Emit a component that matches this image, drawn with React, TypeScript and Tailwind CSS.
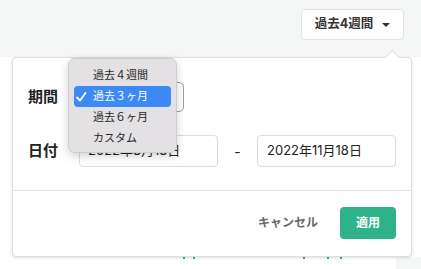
import React from "react";

export default function App() {
  return (
    <div className="relative w-[421px] h-[269px] overflow-hidden bg-white font-['Inter','Noto_Sans_CJK_JP',sans-serif] text-[#222]">
      {/* page background */}
      <div className="flex flex-col h-full">
        <div className="h-[57px] bg-[#f5f6f6] flex justify-end items-start pt-[9px] pr-[17px]">
          <button className="w-[103px] h-[31px] bg-white border border-[#e2e2e2] rounded-[4px] flex items-center justify-center gap-[9px] text-[12.5px] font-bold text-[#333]">
            <span>過去4週間</span>
            <span className="w-0 h-0 border-l-[4px] border-r-[4px] border-t-[4px] border-l-transparent border-r-transparent border-t-[#333]" />
          </button>
        </div>
        <div className="flex-1 flex flex-col justify-end">
          <div className="h-[12px] flex">
            <div className="flex-1 flex items-start">
              <div className="ml-[183px] w-[2px] h-[2px] bg-[#2eb289]" />
              <div className="ml-[8px] w-[2px] h-[2px] bg-[#2eb289]" />
              <div className="ml-[108px] w-[2px] h-[2px] bg-[#2eb289]" />
              <div className="ml-[22px] w-[2px] h-[2px] bg-[#2eb289]" />
              <div className="ml-[11px] w-[2px] h-[2px] bg-[#2eb289]" />
            </div>
            <div className="w-[25px] bg-[#f5f6f6]" />
          </div>
        </div>
      </div>

      {/* popover */}
      <div className="absolute left-[12px] top-[57px] w-[400px] h-[200px] bg-white border border-[#dedede] rounded-[4px] shadow-[0_1px_3px_rgba(0,0,0,0.12)] flex flex-col">
        <div className="absolute -top-[6px] left-[374px] w-[11px] h-[11px] bg-white border-l border-t border-[#dedede] rotate-45" />
        <div className="relative flex flex-col gap-[22px] pt-[23px] pb-[23px] pl-[15px] border-b border-[#e2e2e2]">
          <div className="flex items-center h-[32px]">
            <div className="w-[51px] text-[15px] font-bold">期間</div>
            <div className="w-[105px] h-[30px] border border-[#9d9d9d] rounded-[5px] bg-white" />
          </div>
          <div className="flex items-center h-[32px]">
            <div className="w-[51px] text-[15px] font-bold">日付</div>
            <div className="w-[139px] h-[32px] border border-[#dcdcdc] rounded-[4px] flex items-center pl-[8px] text-[13px]">2022年8月18日</div>
            <div className="w-[39px] text-center text-[14px]">-</div>
            <div className="w-[139px] h-[32px] border border-[#dcdcdc] rounded-[4px] flex items-center pl-[9px] text-[13px]">2022年11月18日</div>
          </div>
        </div>
        <div className="flex justify-end items-center gap-[22px] pt-[16px] pr-[15px]">
          <span className="text-[12px] font-bold text-[#6a6a6a]">キャンセル</span>
          <button className="w-[56px] h-[32px] rounded-[4px] bg-[#2eb289] text-white text-[12px] font-bold">適用</button>
        </div>
      </div>

      {/* native-like dropdown menu */}
      <div className="absolute left-[68px] top-[58px] w-[109px] h-[95px] bg-[#e3e1e4] rounded-[7px] border border-[#cfcdd0] shadow-[0_3px_10px_rgba(0,0,0,0.18)] px-[5px] pt-[6px] flex flex-col text-[11px] text-[#262626]">
        <div className="h-[21px] flex items-center pl-[19px]">過去４週間</div>
        <div className="h-[21px] flex items-center rounded-[4px] bg-[#3e8af5] text-white">
          <svg width="19" height="12" viewBox="0 0 19 12" className="shrink-0">
            <path d="M3 6.5 L6 9.5 L11.5 2" fill="none" stroke="white" strokeWidth="1.8" strokeLinecap="round" strokeLinejoin="round" />
          </svg>
          <span>過去３ヶ月</span>
        </div>
        <div className="h-[21px] flex items-center pl-[19px]">過去６ヶ月</div>
        <div className="h-[21px] flex items-center pl-[19px]">カスタム</div>
      </div>
    </div>
  );
}
